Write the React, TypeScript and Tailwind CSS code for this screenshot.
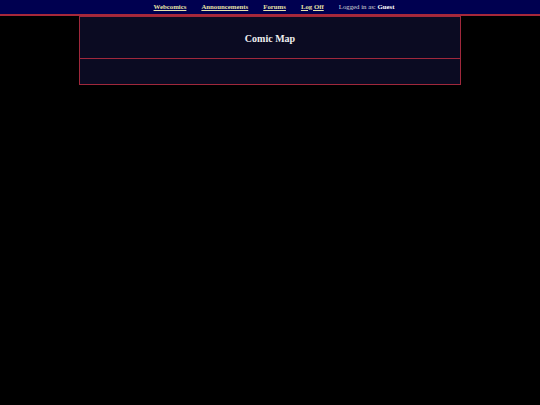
export default function App() {
  const links = ["Webcomics", "Announcements", "Forums", "Log Off"];

  return (
    <div className="min-h-[405px] bg-black" style={{ fontFamily: '"Liberation Serif", "Times New Roman", serif' }}>
      {/* top nav */}
      <div className="h-[16px] bg-[#000050] border-b-2 border-[#a8283a] flex items-center justify-center gap-[15px] pl-[8px] text-[6.8px] leading-none">
        {links.map((l) => (
          <a key={l} href="#" className="font-bold text-[#e6e0a8] underline">
            {l}
          </a>
        ))}
        <span className="text-[#d8d8d8]">
          Logged in as: <b className="text-white">Guest</b>
        </span>
      </div>

      {/* panel */}
      <div className="w-[382px] ml-[79px] border border-[#a0283c] bg-[#0b0b22]">
        <div className="h-[42px] flex items-center justify-center border-b border-[#a0283c] pt-[1px]">
          <h1 className="text-[10px] font-bold text-[#f0f0f0]">Comic Map</h1>
        </div>
        <div className="h-[25px]" />
      </div>
    </div>
  );
}
